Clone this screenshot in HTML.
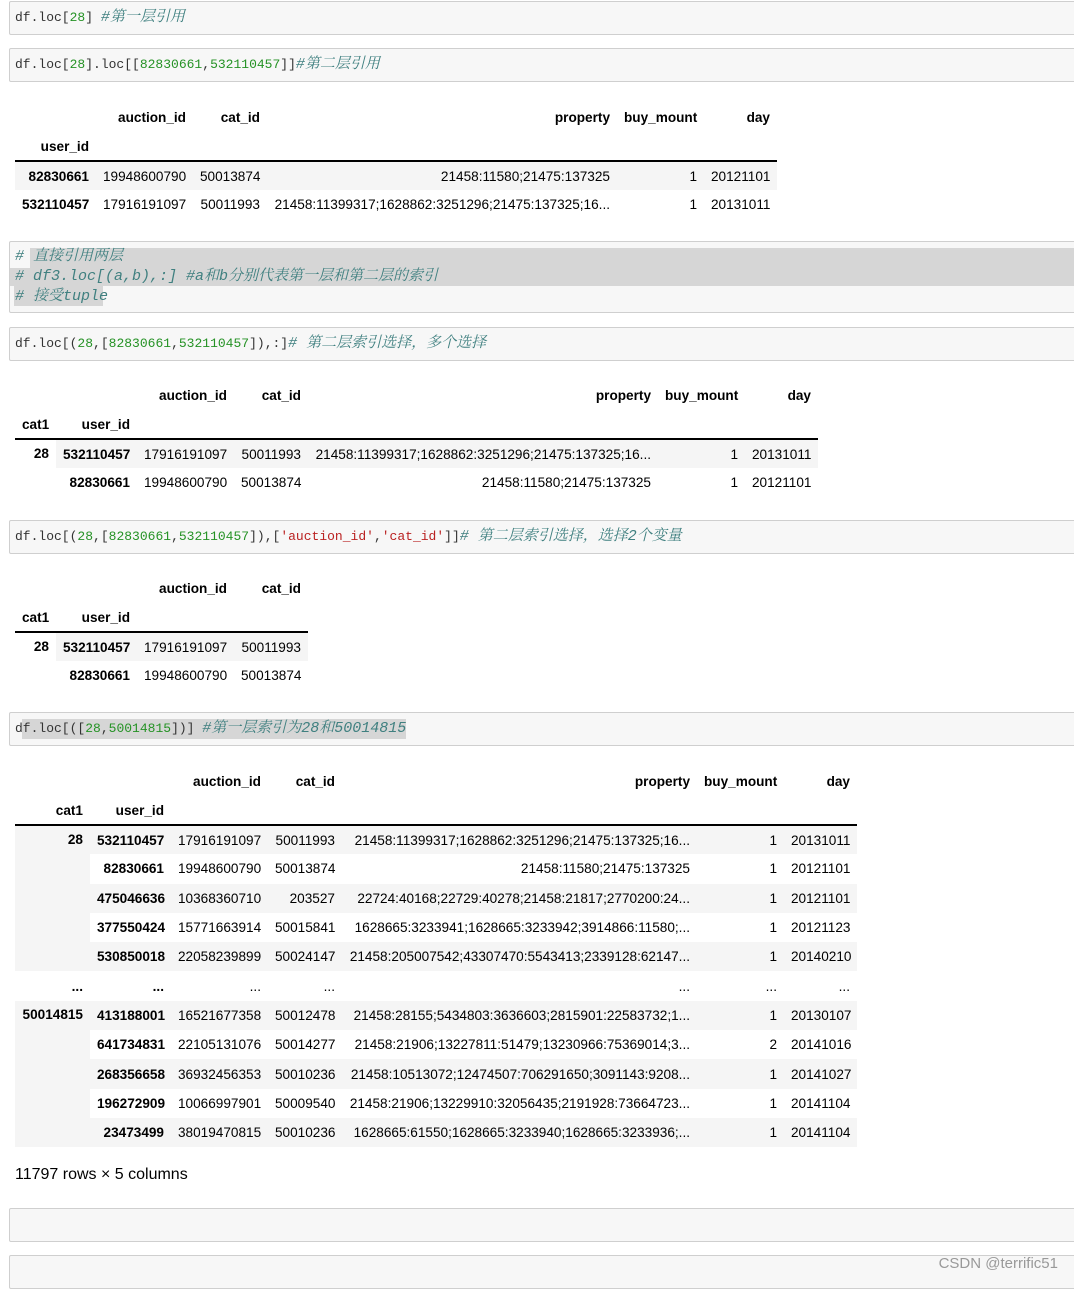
<!DOCTYPE html>
<html><head><meta charset="utf-8"><style>
body{margin:0;width:1074px;height:1280px;background:#fff;position:relative;overflow:hidden;font-family:"Liberation Sans",Arial,sans-serif;}
.cell{position:absolute;left:9px;width:1070px;background:#f7f7f7;border:1px solid #cfcfcf;border-radius:2px;box-sizing:border-box;}
.code{position:absolute;left:15px;font-family:"Liberation Mono","Noto Sans CJK SC",monospace;font-size:13px;color:#333;white-space:pre;line-height:20px;}
.n{color:#259225}.c{color:#408080;font-style:italic;font-family:"Liberation Mono","Noto Serif CJK SC",serif;font-size:15px}.s{color:#ba2121}
.sel{background:#d6d6d6}
table{position:absolute;border-collapse:collapse;font-size:13.6px;color:#000;table-layout:fixed;}
td,th{height:29.3px;padding:0 7px;text-align:right;white-space:nowrap;overflow:hidden;box-sizing:border-box;}
th{font-weight:bold}
tr.g{background:#f5f5f5}
tr.last th,tr.last td{border-bottom:2px solid #000}
tr.hd th{height:29px}
.foot{position:absolute;left:15px;top:1166px;font-size:16px;color:#000}
.wm{position:absolute;right:16px;top:1255px;font-size:15px;color:#999}
</style></head><body>

<div class="cell" style="top:1px;height:34px"></div>
<div class="code" style="top:8px">df.loc[<span class="n">28</span>] <span class="c">#第一层引用</span></div>

<div class="cell" style="top:48px;height:34px"></div>
<div class="code" style="top:55px">df.loc[<span class="n">28</span>].loc[[<span class="n">82830661</span>,<span class="n">532110457</span>]]<span class="c">#第二层引用</span></div>

<table style="left:15px;top:103px;width:762px">
<colgroup><col style="width:81px"><col style="width:97px"><col style="width:74px"><col style="width:350px"><col style="width:87px"><col style="width:73px"></colgroup>
<tr class="hd"><th></th><th>auction_id</th><th>cat_id</th><th>property</th><th>buy_mount</th><th>day</th></tr>
<tr class="hd last"><th>user_id</th><th></th><th></th><th></th><th></th><th></th></tr>
<tr class="g"><th>82830661</th><td>19948600790</td><td>50013874</td><td>21458:11580;21475:137325</td><td>1</td><td>20121101</td></tr>
<tr><th>532110457</th><td>17916191097</td><td>50011993</td><td>21458:11399317;1628862:3251296;21475:137325;16...</td><td>1</td><td>20131011</td></tr>
</table>

<div class="cell" style="top:241px;height:72px"></div>
<div style="position:absolute;left:30px;top:248px;width:1044px;height:20px" class="sel"></div>
<div style="position:absolute;left:10px;top:268px;width:1064px;height:18px" class="sel"></div>
<div style="position:absolute;left:14px;top:286px;width:89px;height:20px" class="sel"></div>
<div class="code" style="top:247px"><span class="c"># 直接引用两层
# df3.loc[(a,b),:] #a和b分别代表第一层和第二层的索引
# 接受tuple</span></div>

<div class="cell" style="top:327px;height:34px"></div>
<div class="code" style="top:334px">df.loc[(<span class="n">28</span>,[<span class="n">82830661</span>,<span class="n">532110457</span>]),:]<span class="c"># 第二层索引选择，多个选择</span></div>

<table style="left:15px;top:381px;width:803px">
<colgroup><col style="width:41px"><col style="width:81px"><col style="width:97px"><col style="width:74px"><col style="width:350px"><col style="width:87px"><col style="width:73px"></colgroup>
<tr class="hd"><th></th><th></th><th>auction_id</th><th>cat_id</th><th>property</th><th>buy_mount</th><th>day</th></tr>
<tr class="hd last"><th>cat1</th><th>user_id</th><th></th><th></th><th></th><th></th><th></th></tr>
<tr class="g"><th rowspan="2" style="vertical-align:top;padding-top:6px;background:#fff">28</th><th>532110457</th><td>17916191097</td><td>50011993</td><td>21458:11399317;1628862:3251296;21475:137325;16...</td><td>1</td><td>20131011</td></tr>
<tr><th>82830661</th><td>19948600790</td><td>50013874</td><td>21458:11580;21475:137325</td><td>1</td><td>20121101</td></tr>
</table>

<div class="cell" style="top:520px;height:34px"></div>
<div class="code" style="top:527px">df.loc[(<span class="n">28</span>,[<span class="n">82830661</span>,<span class="n">532110457</span>]),[<span class="s">'auction_id'</span>,<span class="s">'cat_id'</span>]]<span class="c"># 第二层索引选择，选择2个变量</span></div>

<table style="left:15px;top:574px;width:293px">
<colgroup><col style="width:41px"><col style="width:81px"><col style="width:97px"><col style="width:74px"></colgroup>
<tr class="hd"><th></th><th></th><th>auction_id</th><th>cat_id</th></tr>
<tr class="hd last"><th>cat1</th><th>user_id</th><th></th><th></th></tr>
<tr class="g"><th rowspan="2" style="vertical-align:top;padding-top:6px;background:#fff">28</th><th>532110457</th><td>17916191097</td><td>50011993</td></tr>
<tr><th>82830661</th><td>19948600790</td><td>50013874</td></tr>
</table>

<div class="cell" style="top:712px;height:34px"></div>
<div style="position:absolute;left:22px;top:719px;width:384px;height:20px" class="sel"></div>
<div class="code" style="top:719px">df.loc[([<span class="n">28</span>,<span class="n">50014815</span>])] <span class="c">#第一层索引为28和50014815</span></div>

<table style="left:15px;top:767px;width:842px">
<colgroup><col style="width:75px"><col style="width:81px"><col style="width:97px"><col style="width:74px"><col style="width:355px"><col style="width:87px"><col style="width:73px"></colgroup>
<tr class="hd"><th></th><th></th><th>auction_id</th><th>cat_id</th><th>property</th><th>buy_mount</th><th>day</th></tr>
<tr class="hd last"><th>cat1</th><th>user_id</th><th></th><th></th><th></th><th></th><th></th></tr>
<tr class="g"><th rowspan="5" style="vertical-align:top;padding-top:6px">28</th><th>532110457</th><td>17916191097</td><td>50011993</td><td>21458:11399317;1628862:3251296;21475:137325;16...</td><td>1</td><td>20131011</td></tr>
<tr><th>82830661</th><td>19948600790</td><td>50013874</td><td>21458:11580;21475:137325</td><td>1</td><td>20121101</td></tr>
<tr class="g"><th>475046636</th><td>10368360710</td><td>203527</td><td>22724:40168;22729:40278;21458:21817;2770200:24...</td><td>1</td><td>20121101</td></tr>
<tr><th>377550424</th><td>15771663914</td><td>50015841</td><td>1628665:3233941;1628665:3233942;3914866:11580;...</td><td>1</td><td>20121123</td></tr>
<tr class="g"><th>530850018</th><td>22058239899</td><td>50024147</td><td>21458:205007542;43307470:5543413;2339128:62147...</td><td>1</td><td>20140210</td></tr>
<tr><th>...</th><th>...</th><td>...</td><td>...</td><td>...</td><td>...</td><td>...</td></tr>
<tr class="g"><th rowspan="5" style="vertical-align:top;padding-top:6px">50014815</th><th>413188001</th><td>16521677358</td><td>50012478</td><td>21458:28155;5434803:3636603;2815901:22583732;1...</td><td>1</td><td>20130107</td></tr>
<tr><th>641734831</th><td>22105131076</td><td>50014277</td><td>21458:21906;13227811:51479;13230966:75369014;3...</td><td>2</td><td>20141016</td></tr>
<tr class="g"><th>268356658</th><td>36932456353</td><td>50010236</td><td>21458:10513072;12474507:706291650;3091143:9208...</td><td>1</td><td>20141027</td></tr>
<tr><th>196272909</th><td>10066997901</td><td>50009540</td><td>21458:21906;13229910:32056435;2191928:73664723...</td><td>1</td><td>20141104</td></tr>
<tr class="g"><th>23473499</th><td>38019470815</td><td>50010236</td><td>1628665:61550;1628665:3233940;1628665:3233936;...</td><td>1</td><td>20141104</td></tr>
</table>

<div class="foot">11797 rows × 5 columns</div>

<div class="cell" style="top:1208px;height:34px"></div>
<div class="cell" style="top:1255px;height:34px"></div>
<div class="wm">CSDN @terrific51</div>
</body></html>
